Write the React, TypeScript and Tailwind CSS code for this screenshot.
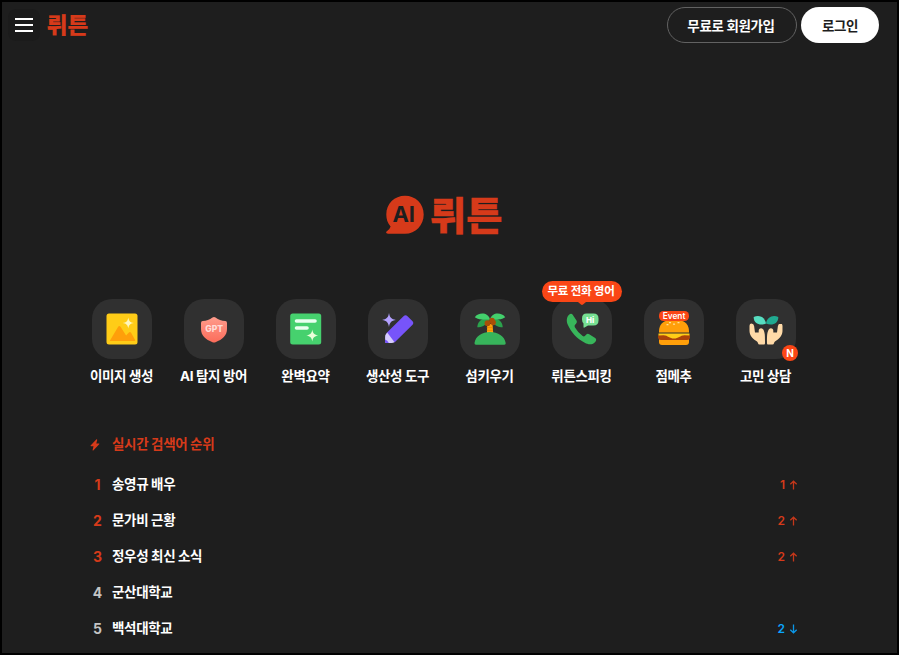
import type { FC, ReactNode } from 'react';

interface Tool {
  label: string;
  icon: ReactNode;
  tooltip?: string;
  isNew?: boolean;
}

interface Keyword {
  text: string;
  change?: number;
}

const sparkle = 'M0-6C.7-2 2-.7 6 0 2 .7.7 2 0 6-.7 2-2 .7-6 0-2-.7-.7-2 0-6Z';

const ImageIcon = () => (
  <svg width="60" height="60" viewBox="0 0 60 60">
    <rect x="14.5" y="14.5" width="31" height="31" rx="2.5" fill="#ffcc17" />
    <path d="M18 41.5 26 28q1.3-2.2 2.7 0l5.4 8.6 2.8-3q1.2-1.2 2.2.2l4 7.1q.5 1.1-.8 1.1H19q-1.6 0-1-.5Z" fill="#ff9f0a" />
    <path d={sparkle} transform="translate(36.3 24) scale(.93)" fill="#fff6bd" />
  </svg>
);

const ShieldIcon = () => (
  <svg width="60" height="60" viewBox="0 0 60 60">
    <defs>
      <linearGradient id="shield" x1="0" y1="0" x2="0" y2="1">
        <stop offset="0" stopColor="#ff9c8c" />
        <stop offset="1" stopColor="#fb6c5a" />
      </linearGradient>
    </defs>
    <path d="M28.5 18.5q1.5-1 3 0c3 2.2 6 3.2 9.8 3.6q1.7.2 1.7 2V30c0 6.500-4.500 10.500-11.500 13.200q-1.500.6-3 0C21.500 40.500 17 36.500 17 30v-5.900q0-1.800 1.700-2c3.800-.4 6.800-1.400 9.800-3.600Z" fill="url(#shield)" />
    <text x="30.200" y="33.200" textAnchor="middle" fontFamily="Inter, sans-serif" fontWeight="800" fontSize="8.600" fill="#ffdcd7">GPT</text>
  </svg>
);

const SummaryIcon = () => (
  <svg width="60" height="60" viewBox="0 0 60 60">
    <rect x="14.200" y="14.500" width="31" height="31" rx="2.500" fill="#46d16e" />
    <path d="M20.500 22h18.500M20.500 29h10.500" stroke="#eafff0" strokeWidth="3.600" strokeLinecap="round" />
    <path d={sparkle} transform="translate(36.300 36.500)" fill="#eaffd9" />
  </svg>
);

const PencilIcon = () => (
  <svg width="60" height="60" viewBox="0 0 60 60">
    <path d={sparkle} transform="translate(21 21) scale(1.150)" fill="#b3a1ff" />
    <path d="M35.500 17.200q2-2 4 0l4.800 4.800q2 2 0 4L26.500 43.500l-8.200-9.300Z" fill="#7754fa" />
    <path d="m19.200 33.600 7.200 9.400q-.8.900-2.800.9h-5q-1.500 0-1.500-1.500v-4.400q0-2.400 2.100-4.400Z" fill="#d6cbff" />
    <path d="M17 40.500q2.600.6 3.800 3.400h-2.300q-1.500 0-1.500-1.500Z" fill="#7754fa" />
  </svg>
);

const PalmIcon = () => (
  <svg width="60" height="60" viewBox="0 0 60 60">
    <path d="M27.300 25h5.200l.8 10h-6.400Z" fill="#ff9f0a" />
    <path d="M26.800 28.500h6M26.800 31.500h6.200" stroke="#e98300" strokeWidth=".7" />
    <path d="M30 20C24 18 17.500 21 17.300 28.200c4.200 0 8.500-1.200 12.700-8.200Z" fill="#2ba24c" />
    <path d="M30 20c6-2 12.500 1 12.700 8.200-4.200 0-8.500-1.200-12.700-8.200Z" fill="#2ba24c" />
    <path d="M30 20.500C28 12.500 18 13.500 14.800 18.200c4 2.500 7 2.500 15.200 2.300Z" fill="#43cf6c" />
    <path d="M30 20.500c2-8 12-7 15.200-2.300-4 2.500-7 2.500-15.200 2.300Z" fill="#43cf6c" />
    <g fill="#a94f08">
      <circle cx="32" cy="21.500" r="2.800" />
      <circle cx="27.500" cy="24.200" r="2.900" />
      <circle cx="33.200" cy="23.500" r="2.700" />
    </g>
    <path d="M14.500 44C15.500 37 22 33 30 33s14.500 4 15.700 11q.3 1.700-1.400 1.700H16q-1.700 0-1.500-1.700Z" fill="#37b45b" />
  </svg>
);

const PhoneIcon = () => (
  <svg width="60" height="60" viewBox="0 0 60 60">
    <path d="M17 15.700q2.500-2 4 .6l3.500 5.200q1 1.600-.3 3l-1.300 1.600q-.8 1 .1 2.300 3.300 5.600 7.700 8.600 1.200.8 2.200-.1l1.400-1.300q1.300-1.300 2.900-.3l5.600 3.500q2.300 1.500.8 3.600C41 46 36.500 46 32.800 43.800 24.800 39.500 19 33.500 15.700 25.600 14.300 22 14.500 18 17 15.700Z" fill="#38b65b" />
    <path d="M34.500 14.500h7q5 0 5 5v2q0 5-5 5H36l-3.500 2q-1 .5-1-.7v-3.400q-1.500-1.500-1.500-3.900v-1q0-5 4.500-5Z" fill="#76df92" />
    <text x="38.100" y="23.500" textAnchor="middle" fontFamily="Inter, sans-serif" fontWeight="800" fontSize="8" fill="#fff">Hi</text>
  </svg>
);

const BurgerIcon = () => (
  <svg width="60" height="60" viewBox="0 0 60 60">
    <path d="M15 33.500v-1.200C15 26 19 21.500 25 21.500h10c6 0 10 4.500 10 10.800v1.200Z" fill="#ff9f0a" />
    <rect x="15" y="38" width="30" height="8" rx="3" fill="#ff9f0a" />
    <rect x="14" y="35" width="32" height="6" rx="3" fill="#ad4309" />
    <path d="M14.500 34.500h31v2l-5-.3c-4.500.2-6 3.300-10.500 3.300s-6-3.100-10.500-3.300l-5 .3Z" fill="#ffcc17" />
    <path d="M25.500 23.700h1M29.500 25.200h1M34 23.700h1M23 25.700h1" stroke="#ffe0a0" strokeWidth="1.200" strokeLinecap="round" />
    <rect x="15" y="12" width="30" height="10" rx="4.500" fill="#fa4616" />
    <text x="30" y="19.900" textAnchor="middle" fontFamily="Inter, sans-serif" fontWeight="600" fontSize="8.300" fill="#fff">Event</text>
  </svg>
);

const HandsIcon = () => (
  <svg width="60" height="60" viewBox="0 0 60 60">
    <path d="M30 24.500c-5.500 2.500-12.500.5-12.300-6.500 6-2.500 11.300.5 12.300 6.500Z" fill="#57ddc0" />
    <path d="M30 24.500c5.500 2.500 12.500.5 12.300-6.500-6-2.500-11.300.5-12.300 6.500Z" fill="#20aa91" />
    <path d="M15.500 24.500q2.300 0 2.600 2.500l.9 6.500h3.700v-1.800q0-2.500 2.500-2.500 1.500 0 2.200 1.500c1.700 3.300 1.600 6.300 1.600 13.200 0 1-.4 1.600-1.400 1.600h-4.100q-1.200 0-1.500-1.200-.3-1.300-1.300-2c-5.500-3.700-6.900-6.500-7.200-10.300v-5.200q0-2.300 2-2.300Z" fill="#ffdaa8" />
    <path d="M44.500 24.500q-2.300 0-2.600 2.500l-.9 6.500h-3.700v-1.800q0-2.500-2.500-2.500-1.500 0-2.200 1.500c-1.700 3.300-1.600 6.300-1.600 13.200 0 1 .4 1.600 1.400 1.600h4.100q1.200 0 1.500-1.200.3-1.300 1.300-2c5.500-3.700 6.900-6.500 7.200-10.300v-5.200q0-2.300-2-2.300Z" fill="#ffdaa8" />
  </svg>
);

const tools: Tool[] = [
  { label: '이미지 생성', icon: <ImageIcon /> },
  { label: 'AI 탐지 방어', icon: <ShieldIcon /> },
  { label: '완벽요약', icon: <SummaryIcon /> },
  { label: '생산성 도구', icon: <PencilIcon /> },
  { label: '섬키우기', icon: <PalmIcon /> },
  { label: '뤼튼스피킹', icon: <PhoneIcon />, tooltip: '무료 전화 영어' },
  { label: '점메추', icon: <BurgerIcon /> },
  { label: '고민 상담', icon: <HandsIcon />, isNew: true },
];

const keywords: Keyword[] = [
  { text: '송영규 배우', change: 1 },
  { text: '문가비 근황', change: 2 },
  { text: '정우성 최신 소식', change: 2 },
  { text: '군산대학교' },
  { text: '백석대학교', change: -2 },
];

const Wordmark: FC<{ width: number; height: number }> = ({ width, height }) => (
  <svg width={width} height={height} viewBox="0 0 70 39" preserveAspectRatio="none" className="overflow-visible">
    <text x="-2" y="33.500" textLength="72.500" lengthAdjust="spacingAndGlyphs" fontFamily="'Noto Sans CJK KR', sans-serif" fontWeight="900" fontSize="39" fill="#d63a1a" stroke="#d63a1a" strokeWidth="0.300">뤼튼</text>
  </svg>
);

const ToolItem: FC<{ tool: Tool }> = ({ tool }) => (
  <div className="flex w-[92px] flex-col items-center">
    <div className="relative size-[60px] rounded-[20px] bg-[#303030]">
      {tool.icon}
      {tool.tooltip && (
        <div className="absolute -top-[18px] left-1/2 flex h-[21px] w-20 -translate-x-1/2 items-center justify-center rounded-full bg-[#fa4616] pr-0.5 text-[11.5px] font-bold tracking-[-0.25px] whitespace-nowrap text-white">
          {tool.tooltip}
          <svg width="8" height="3" className="absolute top-[20.5px] left-9">
            <path d="M0 0h8L5 2.500q-1 .8-2 0Z" fill="#fa4616" />
          </svg>
        </div>
      )}
      {tool.isNew && (
        <span className="absolute -right-0.5 -bottom-0.5 flex size-4 items-center justify-center rounded-full bg-[#fa4616] text-[10px] font-bold text-white">N</span>
      )}
    </div>
    <span className="mt-[7px] mr-px text-[13.5px] leading-5 font-bold tracking-[-0.35px] whitespace-nowrap text-white">{tool.label}</span>
  </div>
);

const Change: FC<{ value: number }> = ({ value }) => (
  <div className={`flex items-center gap-1 pt-0.5 text-[12px] font-semibold ${value > 0 ? 'text-[#d63a1a]' : 'text-[#0aa5ff]'}`}>
    {Math.abs(value)}
    <svg width="9" height="10" viewBox="0 0 9 10" fill="none" stroke="currentColor" strokeWidth="1.300" className={value > 0 ? 'opacity-90' : 'rotate-180 opacity-90'}>
      <path d="M4.500 9.500v-8M1.300 4.300l3.200-3.100 3.200 3.100" />
    </svg>
  </div>
);

export default function App() {
  return (
    <div className="h-[655px] w-[899px] overflow-hidden border-2 border-black bg-[#1e1e1e] font-[Inter,'Noto_Sans_CJK_KR',sans-serif]">
      <header className="flex h-[46px] items-center pr-[18px] pl-1.5">
        <button className="flex size-8 flex-col items-center justify-center gap-1 rounded-lg bg-[#1b1b1b]">
          <span className="h-0.5 w-[18px] bg-white" />
          <span className="h-0.5 w-[18px] bg-white" />
          <span className="h-0.5 w-[18px] bg-white" />
        </button>
        <div className="ml-2">
          <Wordmark width={40} height={22} />
        </div>
        <div className="ml-auto flex gap-1">
          <button className="h-9 w-[130px] rounded-full border border-[#626262] pt-0.5 pr-0.5 text-[13.5px] font-bold tracking-[-0.35px] text-white">무료로 회원가입</button>
          <button className="h-9 w-[78px] rounded-full bg-white pt-0.5 text-[13.5px] font-bold tracking-[-0.35px] text-[#1e1e1e]">로그인</button>
        </div>
      </header>

      <main>
        <div className="mt-[147px] ml-[384px] flex items-center gap-2">
          <svg width="38" height="40" viewBox="0 0 38 40">
            <path d="M19 .8c10.500 0 18.700 8 18.700 18.700S29.500 38.800 19 38.800H2Q-.5 38.500.3 36.800q3.500-2 4.300-5.300C1.500 28 .3 24 .3 19.500.3 8.800 8.500.8 19 .8Z" fill="#d63a1a" />
            <text x="17.700" y="27" textAnchor="middle" fontFamily="Inter, sans-serif" fontWeight="700" fontSize="22" fill="#1e1e1e">AI</text>
          </svg>
          <Wordmark width={70} height={39} />
        </div>

        <section className="mt-16 ml-[74px] flex">
          {tools.map((tool) => (
            <ToolItem key={tool.label} tool={tool} />
          ))}
        </section>

        <section className="mt-10 ml-[88px] w-[708px]">
          <div className="flex h-9 items-center text-[#d63a1a]">
            <svg width="10" height="12" viewBox="0 0 10 12" className="mt-0.5 mr-3">
              <path d="M6.500.300.600 6.400q-.5.800.4.800h2.500L2.600 11q0 .9.700.4l5.900-6.200q.5-.7-.3-.8H6.300L7.200.900Q7.200-.1 6.500.300Z" fill="currentColor" />
            </svg>
            <h2 className="text-[13.5px] font-bold tracking-[-0.35px]">실시간 검색어 순위</h2>
          </div>
          <ol className="mt-1">
            {keywords.map((keyword, i) => (
              <li key={keyword.text} className="flex h-9 items-center">
                <span className={`w-[15px] text-center text-[14px] font-bold ${i < 3 ? 'text-[#d63a1a]' : 'text-[#c4c4c4]'}`}>{i + 1}</span>
                <span className="ml-[7px] flex-1 text-[13.5px] font-bold tracking-[-0.35px] text-white">{keyword.text}</span>
                {keyword.change && <Change value={keyword.change} />}
              </li>
            ))}
          </ol>
        </section>
      </main>
    </div>
  );
}
